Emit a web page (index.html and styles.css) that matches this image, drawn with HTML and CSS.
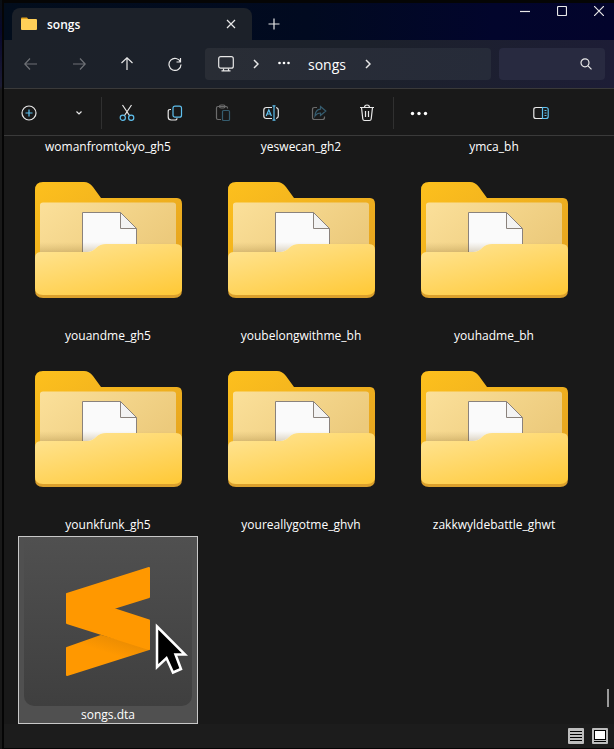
FILE: index.html
```
<!DOCTYPE html>
<html lang="en">
<head>
<meta charset="utf-8">
<title>songs</title>
<link rel="stylesheet" href="styles.css">
</head>
<body>
<svg class="defs" aria-hidden="true">
  <defs>
    <linearGradient id="back" x1="0" y1="0" x2="1" y2="1"><stop offset="0" stop-color="#fdc01d"/><stop offset="1" stop-color="#e2a020"/></linearGradient>
    <linearGradient id="sheet" x1="0" y1="0" x2="1" y2="0.5"><stop offset="0" stop-color="#fbe09a"/><stop offset="1" stop-color="#ecca7c"/></linearGradient>
    <linearGradient id="shade" x1="0" y1="0" x2="0" y2="1"><stop offset="0.5" stop-color="#a08040" stop-opacity="0"/><stop offset="1" stop-color="#806020" stop-opacity="0.25"/></linearGradient>
    <linearGradient id="front" x1="0.1" y1="0" x2="0.8" y2="1.1"><stop offset="0" stop-color="#ffe493"/><stop offset="1" stop-color="#ffc937"/></linearGradient>
    <linearGradient id="fold" gradientUnits="userSpaceOnUse" x1="95" y1="102" x2="90" y2="118"><stop offset="0" stop-color="#ec8d02"/><stop offset="1" stop-color="#ff9800"/></linearGradient>
    <symbol id="folder" viewBox="0 0 147 116">
      <path fill="url(#back)" d="M0 8Q0 0 8 0H49Q54 0 58 5L66 16H142Q147 16 147 22V106H0Z"/>
      <path fill="url(#sheet)" d="M5 23Q5 20.500 8 20.500H138Q141 20.500 141 23V80H5Z"/>
      <path fill="#fafafa" stroke="#8a827c" stroke-width="1" d="M47.500 80V30.500H85.500L101.500 46.500V80Z"/>
      <path fill="#f3f3f3" stroke="#8a827c" stroke-width="1" d="M85.500 30.500V46.500H101.500Z"/>
      <path fill="url(#shade)" d="M5 50H141V62H71Q65 62 61 66T52 70H5Z"/>
      <path fill="#dba02c" d="M0 76H147V108Q147 116 139 116H8Q0 116 0 108Z"/>
      <path fill="url(#front)" d="M0 76Q0 70 6 70H52Q57 70 61 66T71 62H141Q147 62 147 68V106Q147 113 139 113H8Q0 113 0 106Z"/>
    </symbol>
  </defs>
</svg>
<div class="window">
  <header class="titlebar">
    <div class="tab">
      <svg class="tab-icon" width="16" height="14" viewBox="0 0 16 14"><path fill="#e5a51d" d="M0 1.500Q0 .5 1 .5H6L8 3H0Z"/><rect y="2" width="16" height="11" rx="1" fill="#ffcf58"/></svg>
      <span class="tab-title">songs</span>
      <button class="icon-button tab-close" aria-label="Close tab"><svg width="10" height="10" viewBox="0 0 10 10"><path d="M1 1L9 9M9 1L1 9"/></svg></button>
    </div>
    <button class="icon-button new-tab" aria-label="New tab"><svg width="12" height="12" viewBox="0 0 12 12"><path d="M6 .5V11.500M.5 6H11.500"/></svg></button>
    <div class="window-controls">
      <button class="icon-button" aria-label="Minimize"><svg width="10" height="10" viewBox="0 0 10 10"><path d="M0 5.500H10"/></svg></button>
      <button class="icon-button" aria-label="Maximize"><svg width="10" height="10" viewBox="0 0 10 10"><rect x=".5" y=".5" width="9" height="9" rx="1"/></svg></button>
      <button class="icon-button" aria-label="Close"><svg width="10" height="10" viewBox="0 0 10 10"><path d="M0 0L10 10M10 0L0 10"/></svg></button>
    </div>
  </header>

  <nav class="navigation">
    <button class="icon-button wide dim" aria-label="Back"><svg width="14" height="14" viewBox="0 0 14 14"><path d="M13 7H1M6 1.500L.8 7L6 12.500"/></svg></button>
    <button class="icon-button wide dim" aria-label="Forward"><svg width="14" height="14" viewBox="0 0 14 14"><path d="M1 7H13M8 1.500L13.200 7L8 12.500"/></svg></button>
    <button class="icon-button wide" aria-label="Up"><svg width="14" height="14" viewBox="0 0 14 14"><path d="M7 13V1M1.500 6L7 .8L12.500 6"/></svg></button>
    <button class="icon-button wide" aria-label="Refresh"><svg width="14" height="14" viewBox="0 0 14 14"><path d="M12.500 5A6 6 0 1 0 13 7.500M12.500 1V5H8.500"/></svg></button>
    <div class="address">
      <svg class="line pc" width="16" height="16" viewBox="0 0 16 16"><rect x=".7" y=".7" width="14.600" height="11.500" rx="2"/><path d="M5.500 12.500V14.500M10.500 12.500V14.500M3.500 14.800H12.500"/></svg>
      <svg class="line chevron" width="6" height="10" viewBox="0 0 6 10"><path d="M1 1L5 5L1 9"/></svg>
      <svg class="dots" width="14" height="10" viewBox="0 0 14 10"><circle cx="2.500" cy="4" r="1.300"/><circle cx="7" cy="4" r="1.300"/><circle cx="11.500" cy="4" r="1.300"/></svg>
      <a class="crumb" href="#songs">songs</a>
      <svg class="line chevron" width="6" height="10" viewBox="0 0 6 10"><path d="M1 1L5 5L1 9"/></svg>
    </div>
    <div class="search">
      <input type="search" aria-label="Search songs">
      <svg class="line" width="12" height="12" viewBox="0 0 12 12"><circle cx="5" cy="4.800" r="4"/><path d="M8 7.800L11.500 11.300"/></svg>
    </div>
  </nav>

  <div class="toolbar">
    <button class="icon-button wide" aria-label="New"><svg width="16" height="16" viewBox="0 0 16 16"><circle cx="8" cy="8" r="7"/><path class="accent" d="M8 4.500V11.500M4.500 8H11.500"/></svg></button>
    <button class="icon-button narrow" aria-label="New options"><svg width="6" height="6" viewBox="0 0 6 6"><path d="M.5 1.500L3 4L5.500 1.500"/></svg></button>
    <span class="divider"></span>
    <button class="icon-button wide" aria-label="Cut"><svg width="16" height="18" viewBox="0 0 16 18"><path d="M3.500 1L10.800 12M12.500 1L5.200 12"/><circle class="accent" cx="3.800" cy="13.800" r="2.600"/><circle class="accent" cx="12.200" cy="13.800" r="2.600"/></svg></button>
    <button class="icon-button wide" aria-label="Copy"><svg width="16" height="16" viewBox="0 0 16 16"><path d="M4 4.500H3Q1.200 4.500 1.200 6.500V12Q1.200 15 4.200 15H8Q10 15 10 13.200"/><rect class="accent" x="6" y="1.200" width="8.500" height="11" rx="2"/></svg></button>
    <button class="icon-button wide dim" aria-label="Paste"><svg width="16" height="18" viewBox="0 0 16 18"><path d="M6 15.500H3Q1.500 15.500 1.500 14V4Q1.500 2.500 3 2.500H11Q12.500 2.500 12.500 4V4.500M4.500 2.500Q4.500 1 6 1H8.500Q10 1 10 2.500T8.500 4H6Q4.500 4 4.500 2.500Z"/><rect class="accent" x="7.500" y="6.500" width="7" height="10" rx="1"/></svg></button>
    <button class="icon-button wide" aria-label="Rename"><svg width="16" height="16" viewBox="0 0 16 16"><path d="M9 13.500H3.500Q.8 13.500 .8 11V5Q.8 2.500 3.500 2.500H9M13 2.500Q15.300 3 15.300 5V11Q15.300 13 13 13.500"/><path class="accent" d="M3.200 11L5.800 4.800L8.400 11M4.200 9H7.500M11 1V15M9.500 .8H12.500M9.500 15.200H12.500"/></svg></button>
    <button class="icon-button wide dim" aria-label="Share"><svg width="16" height="16" viewBox="0 0 16 16"><path d="M6 2.500H3.500Q1.500 2.500 1.500 4.500V12.500Q1.500 14.500 3.500 14.500H11.500Q13.500 14.500 13.500 12.500V11.500"/><path class="accent" d="M9.500 1.500L14.800 6L9.500 10.500V8Q6 8 4 11Q4.500 4.500 9.500 4.200Z"/></svg></button>
    <button class="icon-button wide" aria-label="Delete"><svg width="16" height="18" viewBox="0 0 16 18"><path d="M1 3.500H15M5.500 3.500Q5.500 1 8 1T10.500 3.500M2.500 3.500L3.800 15Q4 16.500 5.500 16.500H10.500Q12 16.500 12.200 15L13.500 3.500M6.500 7V13M9.500 7V13"/></svg></button>
    <span class="divider"></span>
    <button class="icon-button wide" aria-label="More"><svg class="dots" width="18" height="6" viewBox="0 0 18 6"><circle cx="2.500" cy="3.500" r="1.700"/><circle cx="9" cy="3.500" r="1.700"/><circle cx="15.500" cy="3.500" r="1.700"/></svg></button>
    <button class="icon-button wide details" aria-label="Details pane"><svg width="16" height="14" viewBox="0 0 16 14"><path d="M9.500 1.500H3Q.8 1.500 .8 3.500V10.500Q.8 12.500 3 12.500H9.500"/><path class="accent" d="M9.500 1.500H13Q15.200 1.500 15.200 3.500V10.500Q15.200 12.500 13 12.500H9.500ZM11.500 4.500H13.500M11.500 7H13.500M11.500 9.500H13.500"/></svg></button>
  </div>

  <main class="content">
    <ul class="files">
      <li><button class="tile">womanfromtokyo_gh5</button></li>
      <li><button class="tile">yeswecan_gh2</button></li>
      <li><button class="tile">ymca_bh</button></li>
      <li><button class="tile full"><svg class="folder"><use href="#folder"/></svg><span>youandme_gh5</span></button></li>
      <li><button class="tile full"><svg class="folder"><use href="#folder"/></svg><span>youbelongwithme_bh</span></button></li>
      <li><button class="tile full"><svg class="folder"><use href="#folder"/></svg><span>youhadme_bh</span></button></li>
      <li><button class="tile full"><svg class="folder"><use href="#folder"/></svg><span>younkfunk_gh5</span></button></li>
      <li><button class="tile full"><svg class="folder"><use href="#folder"/></svg><span>youreallygotme_ghvh</span></button></li>
      <li><button class="tile full"><svg class="folder"><use href="#folder"/></svg><span>zakkwyldebattle_ghwt</span></button></li>
      <li>
        <button class="tile full selected">
          <span class="app-icon"><svg width="168" height="169" viewBox="0 0 168 169">
            <path fill="url(#fold)" stroke="url(#fold)" stroke-width="2" stroke-linejoin="round" d="M43 111L77 99L125 112L43 138Z"/>
            <path fill="#ff9800" stroke="#ff9800" stroke-width="2" stroke-linejoin="round" d="M43 57L125 31V60L88 71.500L125 83.500V112L43 86Z"/>
          </svg></span>
          <span>songs.dta</span>
        </button>
        <svg class="pointer" width="36" height="54" viewBox="0 0 36 54"><path fill="#000" stroke="#fff" stroke-width="2.500" d="M3 4.500L31 32.500H21.500L27 47L19 50.500L12.500 36L3 45Z"/></svg>
      </li>
    </ul>
    <span class="scroll-thumb"></span>
  </main>

  <footer class="statusbar">
    <button class="view" aria-label="Details view"><svg width="16" height="16" viewBox="0 0 16 16"><path stroke="#000" d="M2 3.500H14M2 6.500H14M2 9.500H14M2 12.500H14"/></svg></button>
    <button class="view" aria-label="Large icons view"><svg width="16" height="16" viewBox="0 0 16 16"><rect x="2.500" y="2.500" width="11" height="9" fill="#fff" stroke="#000"/><path stroke="#000" d="M2 13.500H14"/></svg></button>
  </footer>
</div>
</body>
</html>
```
FILE: styles.css
```
* { box-sizing: border-box; }

body {
  margin: 0;
  padding-left: 2px;
  background: linear-gradient(#0a1014, #08082c 30px, #1c1c34 86px, #191919 90px) no-repeat #191919;
  color: #fff;
  font-family: "Open Sans", "Noto Sans", sans-serif;
  font-size: 12px;
}

button {
  border: 0;
  padding: 0;
  background: none;
  color: inherit;
  font: inherit;
}

svg { display: block; flex: none; }

.defs { position: absolute; width: 0; height: 0; }

.window {
  display: flex;
  flex-direction: column;
  min-height: 100vh;
  border: solid #050505;
  border-width: 3px 0 1px 2px;
  background: #191919;
}

.icon-button {
  display: flex;
  flex: none;
  align-items: center;
  justify-content: center;
  width: 32px;
  height: 32px;
}

.icon-button svg, .line {
  fill: none;
  stroke: #e8e8e8;
  stroke-width: 1.2;
}

.icon-button .accent { stroke: #5fc0ee; }
.icon-button svg.dots, .dots { fill: #fff; stroke: none; }
.wide { width: 48px; }
.narrow { width: 24px; margin: 0 8px 0 14px; }
.dim { opacity: 0.4; }

.titlebar {
  display: flex;
  height: 37px;
  padding-left: 8px;
  background: linear-gradient(90deg, #020d1c, #010a20 50%, #02052c 80%, #03042c);
}

.tab {
  display: flex;
  align-items: center;
  width: 240px;
  margin-top: 5px;
  padding: 0 5px 0 9px;
  border-radius: 8px 8px 0 0;
  background: #1c2129;
}

.tab-title { flex: 1; margin-left: 10px; font-weight: 600; }
.new-tab { margin: 5px 0 0 6px; }
.window-controls { display: flex; margin-left: auto; }
.window-controls .icon-button { width: 37px; height: 16px; }
.window-controls .icon-button:last-child { margin-right: -3px; }

.navigation {
  display: flex;
  align-items: center;
  height: 48px;
  padding: 0 9px 0 3px;
  background: linear-gradient(90deg, #1c2129, #1c212b 60%, #1d1d36);
}

.address {
  display: flex;
  flex: 1;
  align-items: center;
  height: 32px;
  margin-left: 6px;
  padding-left: 13px;
  border-radius: 4px;
  background: linear-gradient(90deg, #292d35, #262b39);
}

.address .chevron { margin: 0 18px 0 19px; stroke-width: 1.5; }
.address .crumb { margin-left: 17px; color: #fff; font-size: 14px; text-decoration: none; }

.search {
  display: flex;
  align-items: center;
  width: 106px;
  height: 32px;
  margin-left: 8px;
  padding-right: 13px;
  border-radius: 4px;
  background: #282a40;
}

.search input {
  flex: 1;
  min-width: 0;
  border: 0;
  outline: 0;
  background: none;
  color: inherit;
  font: inherit;
}

.toolbar {
  display: flex;
  align-items: center;
  height: 48px;
  padding: 2px 49px 0 1px;
  border: solid #3a3a3a;
  border-width: 1px 0;
}

.divider { width: 1px; height: 32px; margin: 0 1px 0 2px; background: #303030; }
.details { margin-left: auto; }

.content { position: relative; flex: 1; }

.files {
  display: grid;
  grid-template-columns: repeat(auto-fill, 180px);
  gap: 1px 13px;
  margin: 0;
  padding: 0 14px;
  list-style: none;
}

.files li { position: relative; }

.tile {
  display: block;
  width: 100%;
  height: 21px;
  line-height: 20px;
  text-align: center;
}

.full {
  display: flex;
  flex-direction: column;
  align-items: center;
  justify-content: space-between;
  height: 188px;
}

.folder { width: 147px; height: 116px; margin-top: 24px; }
.selected { border: 1px solid #c8c8c8; background: #505050; line-height: 18px; }
.app-icon { border-radius: 0 0 10px 10px; background: linear-gradient(#505050, #3f3f3f); }
.pointer { position: absolute; top: 86px; left: 136px; }

.scroll-thumb {
  position: absolute;
  right: 5px;
  bottom: 17px;
  width: 2px;
  height: 18px;
  background: #9a9a9a;
}

.statusbar {
  display: flex;
  align-items: center;
  justify-content: flex-end;
  gap: 8px;
  height: 24px;
  padding-right: 6px;
  background: #1c1c1c;
}

.view { width: 16px; height: 16px; border-radius: 1px; background: #bdbdbd; }
```
